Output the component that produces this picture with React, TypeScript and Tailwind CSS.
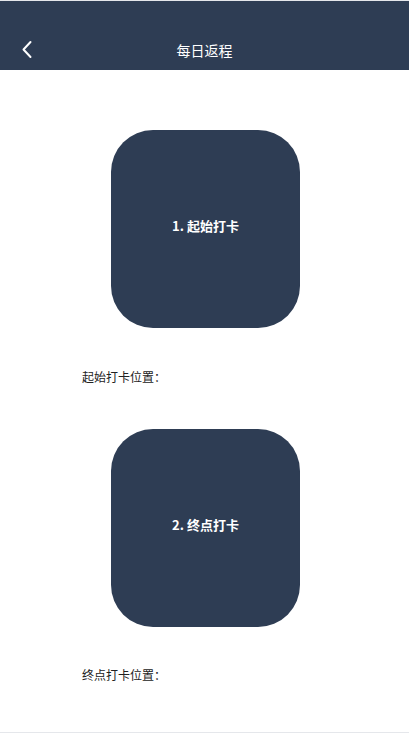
export default function App() {
  const font = { fontFamily: '"Noto Sans CJK SC", "Microsoft YaHei", sans-serif' };
  return (
    <div className="flex h-[733px] w-full flex-col border-b border-gray-200 bg-white" style={font}>
      <header className="relative flex h-[70px] items-end justify-center border-t border-gray-200 bg-[#2e3d54] pb-[10px]">
        <button className="absolute left-[21px] top-[39px] text-white">
          <svg width="12" height="19" viewBox="0 0 12 19" fill="none">
            <path d="M9.5 2 L2.5 9.5 L9.5 17" stroke="white" strokeWidth="2" strokeLinecap="round" strokeLinejoin="round" />
          </svg>
        </button>
        <h1 className="text-[14px] leading-[20px] text-white">每日返程</h1>
      </header>

      <main className="flex flex-col pt-[60px]">
        <section className="flex flex-col">
          <div className="mx-auto flex h-[198px] w-[189px] translate-x-px items-center justify-center rounded-[42px] bg-[#2e3d54] pb-[6px]">
            <span className="text-[13px] font-bold leading-[18px] text-white">1. 起始打卡</span>
          </div>
          <p className="mt-[40px] pl-[82px] text-[12px] leading-[18px] text-[#222]">起始打卡位置：</p>
        </section>

        <section className="mt-[43px] flex flex-col">
          <div className="mx-auto flex h-[198px] w-[189px] translate-x-px items-center justify-center rounded-[42px] bg-[#2e3d54] pb-[6px]">
            <span className="text-[13px] font-bold leading-[18px] text-white">2. 终点打卡</span>
          </div>
          <p className="mt-[39px] pl-[82px] text-[12px] leading-[18px] text-[#222]">终点打卡位置：</p>
        </section>
      </main>
    </div>
  );
}
